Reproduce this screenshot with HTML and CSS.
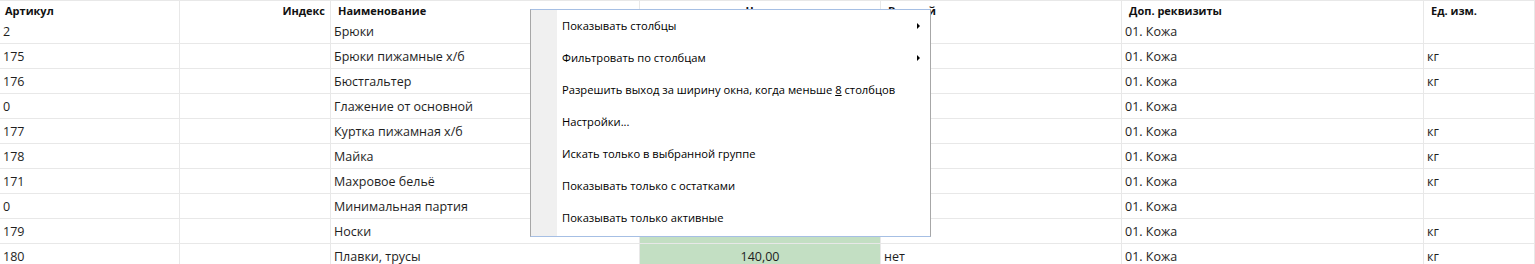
FILE: index.html
```html
<!DOCTYPE html>
<html lang="ru">
<head>
    <meta charset="UTF-8">
    <title>Номенклатура</title>
    <link rel="stylesheet" href="styles.css">
</head>
<body>
    <div class="grid">
        <div class="row head">
            <div class="cell">Артикул</div>
            <div class="cell right">Индекс</div>
            <div class="cell pad">Наименование</div>
            <div class="cell center">Цена</div>
            <div class="cell pad">Весовой</div>
            <div class="cell pad">Доп. реквизиты</div>
            <div class="cell pad">Ед. изм.</div>
        </div>
        <div class="row">
            <div class="cell">2</div><div class="cell"></div><div class="cell">Брюки</div>
            <div class="cell price"></div><div class="cell"></div><div class="cell">01. Кожа</div><div class="cell"></div>
        </div>
        <div class="row">
            <div class="cell">175</div><div class="cell"></div><div class="cell">Брюки пижамные х/б</div>
            <div class="cell price"></div><div class="cell"></div><div class="cell">01. Кожа</div><div class="cell">кг</div>
        </div>
        <div class="row">
            <div class="cell">176</div><div class="cell"></div><div class="cell">Бюстгальтер</div>
            <div class="cell price"></div><div class="cell"></div><div class="cell">01. Кожа</div><div class="cell">кг</div>
        </div>
        <div class="row">
            <div class="cell">0</div><div class="cell"></div><div class="cell">Глажение от основной</div>
            <div class="cell price"></div><div class="cell"></div><div class="cell">01. Кожа</div><div class="cell"></div>
        </div>
        <div class="row">
            <div class="cell">177</div><div class="cell"></div><div class="cell">Куртка пижамная х/б</div>
            <div class="cell price"></div><div class="cell"></div><div class="cell">01. Кожа</div><div class="cell">кг</div>
        </div>
        <div class="row">
            <div class="cell">178</div><div class="cell"></div><div class="cell">Майка</div>
            <div class="cell price"></div><div class="cell"></div><div class="cell">01. Кожа</div><div class="cell">кг</div>
        </div>
        <div class="row">
            <div class="cell">171</div><div class="cell"></div><div class="cell">Махровое бельё</div>
            <div class="cell price"></div><div class="cell"></div><div class="cell">01. Кожа</div><div class="cell">кг</div>
        </div>
        <div class="row">
            <div class="cell">0</div><div class="cell"></div><div class="cell">Минимальная партия</div>
            <div class="cell price"></div><div class="cell"></div><div class="cell">01. Кожа</div><div class="cell"></div>
        </div>
        <div class="row">
            <div class="cell">179</div><div class="cell"></div><div class="cell">Носки</div>
            <div class="cell price"></div><div class="cell"></div><div class="cell">01. Кожа</div><div class="cell">кг</div>
        </div>
        <div class="row">
            <div class="cell">180</div><div class="cell"></div><div class="cell">Плавки, трусы</div>
            <div class="cell price">140,00</div><div class="cell">нет</div><div class="cell">01. Кожа</div><div class="cell">кг</div>
        </div>
    </div>

    <div class="menu">
        <div class="menu-gutter"></div>
        <ul class="menu-items">
            <li class="menu-item sub">Показывать столбцы</li>
            <li class="menu-item sub">Фильтровать по столбцам</li>
            <li class="menu-item">Разрешить выход за ширину окна, когда меньше <u>8</u> столбцов</li>
            <li class="menu-item">Настройки...</li>
            <li class="menu-item">Искать только в выбранной группе</li>
            <li class="menu-item">Показывать только с остатками</li>
            <li class="menu-item">Показывать только активные</li>
        </ul>
    </div>
</body>
</html>
```

FILE: styles.css
```css
body {
    margin: 0;
    background: #fff;
    font-family: "Open Sans", "Noto Sans", sans-serif;
    color: #1e1e1e;
    overflow: hidden;
}
.grid {
    border-top: 1px solid #e8e8e8;
}
.row {
    display: grid;
    grid-template-columns: 180px 151px 309px 241px 241px 302px 1fr;
    height: 25px;
    box-sizing: border-box;
    border-bottom: 1px solid #e8e8e8;
    font-size: 12.5px;
}
.row.head {
    height: 18px;
    border-bottom: none;
    font-size: 11px;
    font-weight: bold;
    color: #111;
}
.cell {
    display: flex;
    align-items: center;
    padding: 0 3px;
    border-right: 1px solid #e8e8e8;
    white-space: nowrap;
    overflow: hidden;
}
.head .cell {
    padding: 1px 5px 0;
}
.head .cell.pad {
    padding-left: 7px;
}
.cell.right {
    justify-content: flex-end;
}
.cell.center {
    justify-content: center;
}
.cell.price {
    justify-content: center;
    background: #c3dfc3;
}
.menu {
    position: absolute;
    left: 530px;
    top: 9px;
    width: 401px;
    height: 228px;
    box-sizing: border-box;
    display: flex;
    background: #fff;
    border: 1px solid #a7a7a7;
    border-top-color: #a6bfe4;
    border-bottom-color: #a6bfe4;
    font-size: 11.2px;
    color: #000;
}
.menu-gutter {
    width: 26px;
    background: #f0f0f0;
}
.menu-items {
    flex: 1;
    list-style: none;
    margin: 0;
    padding: 0;
}
.menu-item {
    position: relative;
    height: 32px;
    line-height: 32px;
    padding-left: 5px;
    white-space: nowrap;
}
.menu-item.sub::after {
    content: "";
    position: absolute;
    right: 10px;
    top: 13px;
    border-left: 3px solid #000;
    border-top: 3px solid transparent;
    border-bottom: 3px solid transparent;
}
```
